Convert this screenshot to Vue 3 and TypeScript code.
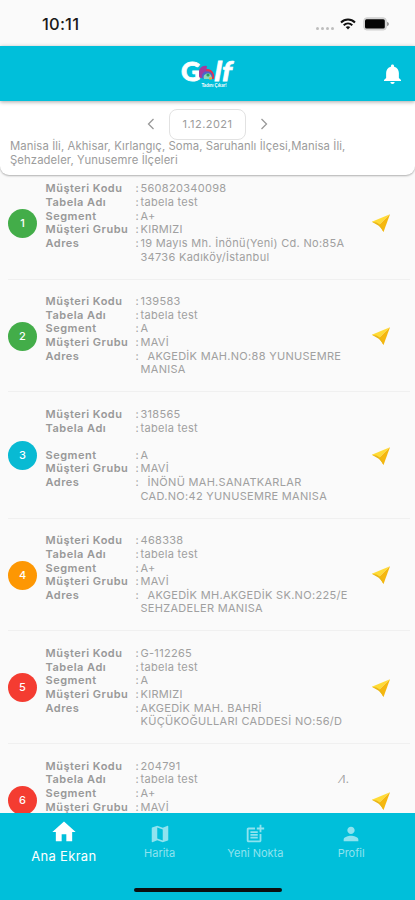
<script setup lang="ts">
interface Customer {
  no: number
  color: string
  code: string
  segment: string
  group: string
  address: string[]
  tall?: boolean
  indent?: boolean
  note?: string
}

const customers: Customer[] = [
  { no: 1, color: 'green', code: '560820340098', segment: 'A+', group: 'KIRMIZI', address: ['19 Mayıs Mh. İnönü(Yeni) Cd. No:85A', '34736 Kadıköy/İstanbul'] },
  { no: 2, color: 'green', code: '139583', segment: 'A', group: 'MAVİ', address: ['AKGEDİK MAH.NO:88 YUNUSEMRE', 'MANISA'], indent: true },
  { no: 3, color: 'cyan', code: '318565', segment: 'A', group: 'MAVİ', address: ['İNÖNÜ MAH.SANATKARLAR', 'CAD.NO:42 YUNUSEMRE MANISA'], tall: true, indent: true },
  { no: 4, color: 'orange', code: '468338', segment: 'A+', group: 'MAVİ', address: ['AKGEDİK MH.AKGEDİK SK.NO:225/E', 'SEHZADELER MANISA'], indent: true },
  { no: 5, color: 'red', code: 'G-112265', segment: 'A', group: 'KIRMIZI', address: ['AKGEDİK MAH. BAHRİ', 'KÜÇÜKOĞULLARI CADDESİ NO:56/D'] },
  { no: 6, color: 'red', code: '204791', segment: 'A+', group: 'MAVİ', address: [], note: '⁄I.' },
]

const tabs = [
  { name: 'Ana Ekran', icon: 'M10 20v-6h4v6h5v-8h3L12 3 2 12h3v8z' },
  { name: 'Harita', icon: 'M20.5 3l-.16.03L15 5.1 9 3 3.36 4.9c-.21.07-.36.25-.36.48V20.5c0 .28.22.5.5.5l.16-.03L9 18.9l6 2.1 5.64-1.9c.21-.07.36-.25.36-.48V3.5c0-.28-.22-.5-.5-.5zM15 19l-6-2.11V5l6 2.11V19z' },
  { name: 'Yeni Nokta', icon: 'M17 19.220H5V7h7V5H5c-1.100 0-2 .9-2 2v12c0 1.100.9 2 2 2h12c1.100 0 2-.9 2-2v-7h-2v7.220zM19 2h-2v3h-3v2h3v3h2V7h3V5h-3V2zM7 9h8v2H7zM7 12v2h8v-2h-3zM7 15h8v2H7z' },
  { name: 'Profil', icon: 'M12 12c2.210 0 4-1.790 4-4s-1.790-4-4-4-4 1.790-4 4 1.790 4 4 4zm0 2c-2.670 0-8 1.340-8 4v2h16v-2c0-2.660-5.330-4-8-4z' },
]
</script>

<template>
  <div class="screen">
    <div class="status">
      <span class="time">10:11</span>
      <div class="indicators">
        <div class="dots"><i v-for="n in 4" :key="n" /></div>
        <svg class="wifi" viewBox="0 0 16 12">
          <g fill="none" stroke="#111" stroke-width="2">
            <path d="M1 4.500C5 .6 11 .6 15 4.500" />
            <path d="M3.700 7.200C6.200 4.900 9.800 4.900 12.300 7.200" />
          </g>
          <path d="M5.700 9.100Q8 7.200 10.300 9.100L8 11.600z" fill="#111" />
        </svg>
        <svg class="battery" viewBox="0 0 26 14">
          <rect x=".8" y=".8" width="22.500" height="12.200" rx="3" fill="#d6d6d6" stroke="#cfcfcf" />
          <rect x="2" y="2.200" width="19.800" height="9.400" rx="1.500" fill="#050505" />
          <path d="M24 4.700q2 .7 2 2.300t-2 2.300z" fill="#999" />
        </svg>
      </div>
    </div>

    <header class="appbar">
      <div class="logo">
        <div class="wordmark">
          <span>G</span>
          <svg class="rainbow" viewBox="0 0 16 15">
            <path d="M.8 12.500A7.300 7.300 0 1 1 15.200 10v4h-5z" fill="#e5304f" />
            <path d="M.8 12.500A7.300 7.300 0 0 1 8 1L6 13z" fill="#a23a9c" />
            <path d="M3 13.500A5.400 5.400 0 1 1 13.500 10v4z" fill="#4c63c8" />
            <path d="M5 14a4 4 0 1 1 7.500-3v3z" fill="#8bd8bd" />
            <circle cx="9" cy="10" r="1.600" fill="#2c9f58" />
            <path d="M10.500 12h2.500v2.500h-3z" fill="#e4b13d" />
          </svg>
          <span class="lf">lf</span>
        </div>
        <span class="slogan">Tadını Çıkar!</span>
      </div>
      <svg class="bell" viewBox="4 2 16 20" preserveAspectRatio="none"><path fill="#fff" d="M12 22c1.100 0 2-.9 2-2h-4c0 1.100.89 2 2 2zm6-6v-5c0-3.070-1.640-5.640-4.500-6.320V4c0-.83-.67-1.500-1.500-1.500s-1.500.67-1.500 1.500v.68C7.630 5.360 6 7.920 6 11v5l-2 2v1h16v-1l-2-2z" /></svg>
    </header>

    <section class="filter">
      <div class="dateline">
        <svg class="chev" viewBox="0 0 8 12"><path d="M6.500 1L1.500 6l5 5" /></svg>
        <span class="date">1.12.2021</span>
        <svg class="chev" viewBox="0 0 8 12"><path d="M1.500 1l5 5-5 5" /></svg>
      </div>
      <p class="region">Manisa İli, Akhisar, Kırlangıç, Soma, Saruhanlı İlçesi,Manisa İli,</p>
      <p class="region">Şehzadeler, Yunusemre İlçeleri</p>
    </section>

    <main class="list">
      <article v-for="c in customers" :key="c.no" class="item">
        <span class="badge" :class="c.color">{{ c.no }}</span>
        <dl class="fields">
          <dt>Müşteri Kodu</dt><dd>{{ c.code }}</dd>
          <dt>Tabela Adı</dt><dd :class="{ tall: c.tall }">tabela test<span v-if="c.note" class="note">{{ c.note }}</span></dd>
          <dt>Segment</dt><dd>{{ c.segment }}</dd>
          <dt>Müşteri Grubu</dt><dd>{{ c.group }}</dd>
          <template v-if="c.address.length">
            <dt>Adres</dt>
            <dd class="address"><span v-for="(line, i) in c.address" :key="i" :class="{ indent: c.indent && i === 0 }">{{ line }}</span></dd>
          </template>
        </dl>
        <svg class="arrow" viewBox="0 0 20 20">
          <path d="M19 1.300L.8 8.800 8 12z" fill="#ffdb36" />
          <path d="M19 1.300L8 12l4.500 7z" fill="#f5b70f" />
          <path d="M.8 8.800Q6 9 8.800 11.500T12.500 19Q10.500 15 8.500 13.500T.8 8.800z" fill="#eab616" />
        </svg>
      </article>
    </main>

    <nav class="tabs">
      <a v-for="(t, i) in tabs" :key="t.name" class="tab" :class="{ active: i === 0 }">
        <svg viewBox="0 0 24 24"><path :d="t.icon" fill="currentColor" /></svg>
        <span>{{ t.name }}</span>
      </a>
      <div class="home-indicator" />
    </nav>
  </div>
</template>

<style>
body {
  margin: 0;
}
</style>

<style scoped>
.screen {
  width: 415px;
  height: 900px;
  display: flex;
  flex-direction: column;
  overflow: hidden;
  background: #fafafa;
  font-family: Inter, "Liberation Sans", sans-serif;
}
.status {
  height: 46px;
  flex: none;
  box-sizing: border-box;
  padding: 2px 26px 0 42px;
  display: flex;
  align-items: center;
  justify-content: space-between;
}
.time {
  font-size: 16.5px;
  font-weight: 500;
  letter-spacing: 0.2px;
  color: #1a1a1a;
}
.indicators {
  display: flex;
  align-items: center;
}
.dots {
  display: flex;
  gap: 2px;
  margin: 8px 6px 0 0;
}
.dots i {
  width: 3px;
  height: 3px;
  border-radius: 50%;
  background: #bdbdbd;
}
.wifi {
  width: 16px;
  height: 12px;
  margin-right: 7px;
}
.battery {
  width: 26px;
  height: 14px;
}
.appbar {
  position: relative;
  z-index: 3;
  height: 55px;
  flex: none;
  box-sizing: border-box;
  display: grid;
  grid-template-columns: 1fr auto 1fr;
  align-items: center;
  padding: 0 14px 0 13px;
  background: #00bfda;
  box-shadow: 0 1px 4px rgba(0, 0, 0, 0.35);
}
.logo {
  grid-column: 2;
  display: flex;
  flex-direction: column;
  align-items: center;
  padding-top: 1px;
  color: #fff;
}
.wordmark {
  display: flex;
  align-items: flex-end;
  height: 20px;
  font: 900 27px/19px Lato, sans-serif;
  -webkit-text-stroke: 0.8px #fff;
}
.rainbow {
  width: 16px;
  height: 15px;
  margin-left: -1px;
}
.lf {
  letter-spacing: 0.5px;
  transform: skewX(-10deg);
}
.slogan {
  margin: 3px 0 0 14px;
  font: 700 4.6px/5px Lato, sans-serif;
}
.bell {
  width: 17px;
  height: 20px;
  justify-self: end;
}
.filter {
  position: relative;
  z-index: 2;
  height: 74px;
  flex: none;
  box-sizing: border-box;
  padding: 7px 10px 0;
  background: #fff;
  border-radius: 0 0 9px 9px;
  box-shadow: 0 1px 2px rgba(0, 0, 0, 0.3);
  color: #9c9c9c;
}
.dateline {
  display: flex;
  justify-content: center;
  align-items: center;
  gap: 14px;
  height: 32px;
}
.chev {
  width: 8px;
  height: 12px;
  fill: none;
  stroke: #999;
  stroke-width: 1.3;
}
.date {
  width: 77px;
  height: 31px;
  box-sizing: border-box;
  border: 1px solid #e2e2e2;
  border-radius: 8px;
  text-align: center;
  line-height: 29px;
  font-size: 11px;
  letter-spacing: 0.45px;
}
.region {
  margin: 0;
  font-size: 11.3px;
  line-height: 13.6px;
  letter-spacing: 0.1px;
  white-space: nowrap;
}
.list {
  flex: 1;
  min-height: 0;
  overflow: hidden;
  margin-top: -8.2px;
}
.item {
  display: grid;
  grid-template-columns: 29px 1fr 20px;
  column-gap: 8.5px;
  align-items: center;
  margin: 0 5px 0 8px;
  padding: 15.6px 19px 14.2px 0;
  border-bottom: 1px solid #f0f0f0;
}
.badge {
  width: 29px;
  height: 29px;
  border-radius: 50%;
  color: #fff;
  font-size: 11px;
  font-weight: 500;
  line-height: 29px;
  text-align: center;
}
.green { background: #43ad49; }
.cyan { background: #08bad3; }
.orange { background: #fd9703; }
.red { background: #f43c31; }
.fields {
  margin: 0;
  min-height: 81.9px;
  display: grid;
  grid-template-columns: 90px 1fr;
  align-content: start;
  font-size: 11px;
  line-height: 13.65px;
  letter-spacing: 0.3px;
  color: #a0a0a0;
  white-space: nowrap;
}
dt {
  font-weight: 600;
  letter-spacing: 0.5px;
  color: #989898;
}
dd {
  margin: 0;
  display: flex;
}
dd::before {
  content: ":";
  width: 5px;
  flex: none;
}
.tall {
  height: 27.3px;
}
.address {
  display: grid;
  grid-template-columns: 5px 1fr;
}
.address span {
  grid-column: 2;
}
.indent {
  padding-left: 7px;
}
.note {
  margin-left: 142px;
}
.arrow {
  width: 20px;
  height: 20px;
}
.tabs {
  position: relative;
  z-index: 2;
  height: 87px;
  flex: none;
  box-sizing: border-box;
  padding: 0 16px;
  display: grid;
  grid-template-columns: repeat(4, 1fr);
  background: #00bfda;
  color: #8fe3ef;
}
.tab {
  display: flex;
  flex-direction: column;
  align-items: center;
  padding-top: 10px;
  font-size: 11px;
  line-height: 13px;
}
.tab svg {
  width: 22px;
  height: 22px;
  margin-bottom: 2px;
}
.active {
  padding-top: 5px;
  color: #fff;
  font-size: 13px;
  line-height: 18px;
  letter-spacing: 0.3px;
}
.active svg {
  width: 28px;
  height: 28px;
  margin-bottom: 1px;
}
.home-indicator {
  position: absolute;
  left: 134px;
  bottom: 8px;
  width: 148px;
  height: 4px;
  border-radius: 2px;
  background: #0b0f10;
}
</style>
